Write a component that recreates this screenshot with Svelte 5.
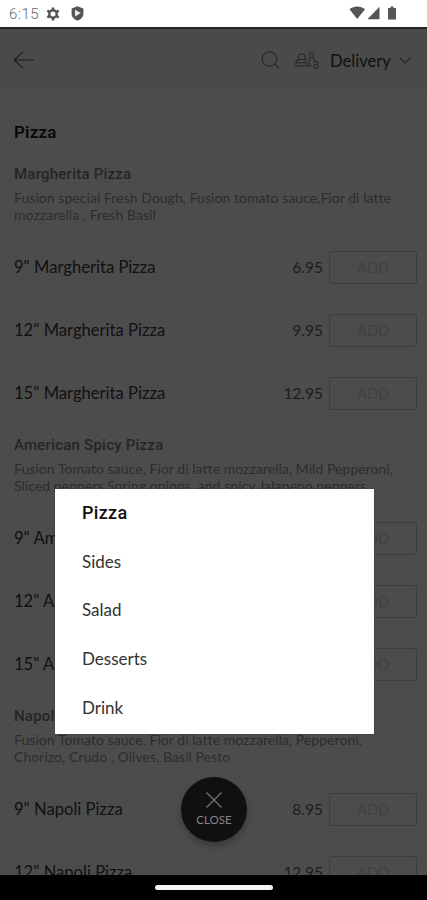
<script>
  let mode = "Delivery";
  let menuOpen = true;
  let active = "Pizza";

  const categories = ["Pizza", "Sides", "Salad", "Desserts", "Drink"];

  const sections = [
    {
      name: "Margherita Pizza",
      lines: [
        "Fusion special Fresh Dough, Fusion tomato sauce,Fior di latte",
        "mozzarella , Fresh Basil",
      ],
      items: [
        { name: '9" Margherita Pizza', price: "6.95" },
        { name: '12" Margherita Pizza', price: "9.95" },
        { name: '15" Margherita Pizza', price: "12.95" },
      ],
    },
    {
      name: "American Spicy Pizza",
      lines: [
        "Fusion Tomato sauce, Fior di latte mozzarella, Mild Pepperoni,",
        "Sliced peppers,Spring onions, and spicy Jalapeno peppers",
      ],
      items: [
        { name: '9" American Spicy Pizza', price: "8.95" },
        { name: '12" American Spicy Pizza', price: "12.95" },
        { name: '15" American Spicy Pizza', price: "15.95" },
      ],
    },
    {
      name: "Napoli Pizza",
      lines: [
        "Fusion Tomato sauce, Fior di latte mozzarella, Pepperoni,",
        "Chorizo, Crudo , Olives, Basil Pesto",
      ],
      items: [
        { name: '9" Napoli Pizza', price: "8.95" },
        { name: '12" Napoli Pizza', price: "12.95" },
      ],
    },
  ];

  function choose(category) {
    active = category;
    menuOpen = false;
  }
</script>

<div class="phone">
  <div class="status">
    <span class="time">6:15</span>
    <svg class="gear" width="14" height="14" viewBox="0 0 14 14">
      <circle cx="7" cy="7" r="3.7" fill="none" stroke="#555" stroke-width="2.4" />
      <path
        d="M7 .4v3M7 10.6v3M1.3 3.7l2.6 1.5M10.1 8.8l2.6 1.5M1.3 10.3l2.6-1.5M10.1 5.2l2.6-1.5"
        stroke="#555"
        stroke-width="2.6"
      />
    </svg>
    <svg width="13" height="15" viewBox="0 0 13 15">
      <path d="M6.5.3 12.4 2.4v5c0 3.4-2.4 5.9-5.9 7.2C3 13.3.6 10.8.6 7.4v-5z" fill="#555" />
      <path d="M4 3.800 9.800 7 4 10.400z" fill="#eee" />
    </svg>
    <svg class="signals" width="49" height="15" viewBox="0 0 49 15">
      <path d="M.5 3.3C5-.4 11.500-.4 16 3.3L8.200 13z" fill="#555" />
      <path d="M30.500.8v12.500H18.400z" fill="#555" />
      <path d="M41.500.5h3V2H47v11.500h-8V2h2.500z" fill="#555" />
    </svg>
  </div>

  <header>
    <svg class="back" width="22" height="20" viewBox="0 0 22 20">
      <path d="M21 9H1.500M9.500 .8 1.300 9l8.200 8.200" fill="none" stroke="#1c1c1c" stroke-width="1.100" />
    </svg>
    <svg class="search" width="20" height="20" viewBox="0 0 20 20">
      <circle cx="8.500" cy="8" r="7.300" fill="none" stroke="#282828" stroke-width="1.100" />
      <path d="m13.800 13.200 4.200 4" stroke="#282828" stroke-width="1.300" />
    </svg>
    <svg class="scooter" width="25" height="18" viewBox="0 0 25 18">
      <g fill="none" stroke="#282828" stroke-width="1.100">
        <path d="M3.500 7.500V4.500Q3.500 2 6 2h1.500Q10 2 10 4.500v3M1 14v-3q0-3.500 3.500-3.500H11V14H1zM1.500 10.800H11" />
        <path d="M14 .8h5M15 .8v5h3.500M14.800 6 13.500 14h3.700M18.300 2v4l3 4.500M11 14h6.500M17.500 9.500h4q2 .5 2 3" />
        <circle cx="20.800" cy="14.200" r="2" />
      </g>
    </svg>
    <span class="mode">{mode}</span>
    <svg class="chevron" width="12" height="8" viewBox="0 0 12 8">
      <path d="m1 1.200 5 4.800 5-4.800" fill="none" stroke="#202020" stroke-width="1.100" />
    </svg>
  </header>

  <main>
    <h1>{active}</h1>
    {#each sections as section}
      <section>
        <h2>{section.name}</h2>
        <div class="description">
          {#each section.lines as line}
            <p>{line}</p>
          {/each}
        </div>
        {#each section.items as item}
          <div class="row">
            <span class="name">{item.name}</span>
            <span class="price">{item.price}</span>
            <button class="add">ADD</button>
          </div>
        {/each}
      </section>
    {/each}
  </main>

  {#if menuOpen}
    <nav class="menu">
      {#each categories as category}
        <button class:active={category === active} on:click={() => choose(category)}>
          {category}
        </button>
      {/each}
    </nav>
  {/if}

  <button class="close" on:click={() => (menuOpen = !menuOpen)}>
    <svg width="18" height="18" viewBox="0 0 18 18">
      <path d="m1.500 1.500 15 15M16.500 1.500l-15 15" stroke="#777" stroke-width="1.100" />
    </svg>
    <span>CLOSE</span>
  </button>

  <footer><div class="handle"></div></footer>
</div>

<style>
  :global(body) {
    margin: 0;
  }

  .phone {
    position: relative;
    display: flex;
    flex-direction: column;
    width: 427px;
    height: 900px;
    overflow: hidden;
    background: #4c4c4c;
    font-family: Lato, "Liberation Sans", sans-serif;
  }

  button {
    font-family: inherit;
    cursor: pointer;
  }

  .status {
    display: flex;
    align-items: center;
    flex: none;
    box-sizing: border-box;
    height: 29px;
    padding: 0 29px 0 9px;
    background: #fff;
    border-bottom: 2px solid #262626;
  }

  .time {
    width: 37px;
    color: #666;
    font-family: Roboto, sans-serif;
    font-size: 15px;
    font-weight: 300;
    letter-spacing: 0.5px;
  }

  .gear {
    margin-right: 11px;
  }

  .signals {
    margin-left: auto;
  }

  header {
    display: flex;
    align-items: center;
    flex: none;
    box-sizing: border-box;
    height: 64px;
    padding: 0 16px 0 13px;
    background: #4a4a4a;
  }

  .search {
    margin-left: auto;
  }

  .scooter {
    margin: 0 10px 0 14px;
  }

  .mode {
    width: 60px;
    color: #101010;
    font-size: 16.6px;
    white-space: nowrap;
  }

  .chevron {
    margin-left: 9px;
  }

  main {
    flex: 1;
    min-height: 0;
    padding: 28px 10px 0 14px;
    overflow: hidden;
  }

  h1,
  h2 {
    margin: 0;
    font-family: Roboto, sans-serif;
    font-weight: 500;
    white-space: nowrap;
  }

  h1 {
    height: 42.5px;
    color: #080808;
    font-size: 17px;
    font-weight: 600;
    line-height: 22px;
    letter-spacing: 0.2px;
  }

  h2 {
    color: #252525;
    font-size: 15px;
    line-height: 21px;
    letter-spacing: 0.23px;
  }

  section {
    height: 271px;
  }

  .description {
    margin: 4px 0 12px;
    color: #2c2c2c;
    font-size: 14px;
    line-height: 17.5px;
    letter-spacing: 0.05px;
    white-space: nowrap;
  }

  .description p {
    margin: 0;
  }

  .row {
    display: flex;
    align-items: center;
    height: 63px;
    color: #111;
    font-size: 16.6px;
  }

  .price {
    margin-left: auto;
    color: #1d1d1d;
    font-size: 15.5px;
  }

  .add {
    width: 88px;
    height: 33px;
    margin-left: 6px;
    padding: 0;
    color: #3d4341;
    background: transparent;
    border: 1.5px solid #37403c;
    border-radius: 2px;
    font-size: 14.5px;
  }

  .menu {
    position: absolute;
    top: 489px;
    left: 55px;
    display: flex;
    flex-direction: column;
    width: 319px;
    height: 245px;
    background: #fff;
    box-shadow: 0 0 1px #222;
  }

  .menu button {
    height: 48.8px;
    padding: 0 27px 2px;
    color: #333;
    background: none;
    border: 0;
    font-size: 17px;
    text-align: left;
  }

  .menu .active {
    color: #111;
    font-family: Roboto, sans-serif;
    font-weight: 500;
    font-size: 18px;
    letter-spacing: 0.3px;
  }

  .close {
    position: absolute;
    top: 777px;
    left: 181px;
    display: flex;
    flex-direction: column;
    align-items: center;
    width: 66px;
    height: 65px;
    padding: 14px 0 0;
    color: #858585;
    background: #101010;
    border: 0;
    border-radius: 50%;
    box-shadow: 0 4px 7px rgba(0, 0, 0, 0.25);
    font-size: 11.5px;
    line-height: 14px;
  }

  .close span {
    margin-top: 4px;
  }

  footer {
    display: flex;
    justify-content: center;
    flex: none;
    height: 25px;
    background: #000;
    z-index: 1;
  }

  .handle {
    width: 118px;
    height: 5px;
    margin-top: 10px;
    background: #f5f5f5;
    border-radius: 3px;
  }
</style>
